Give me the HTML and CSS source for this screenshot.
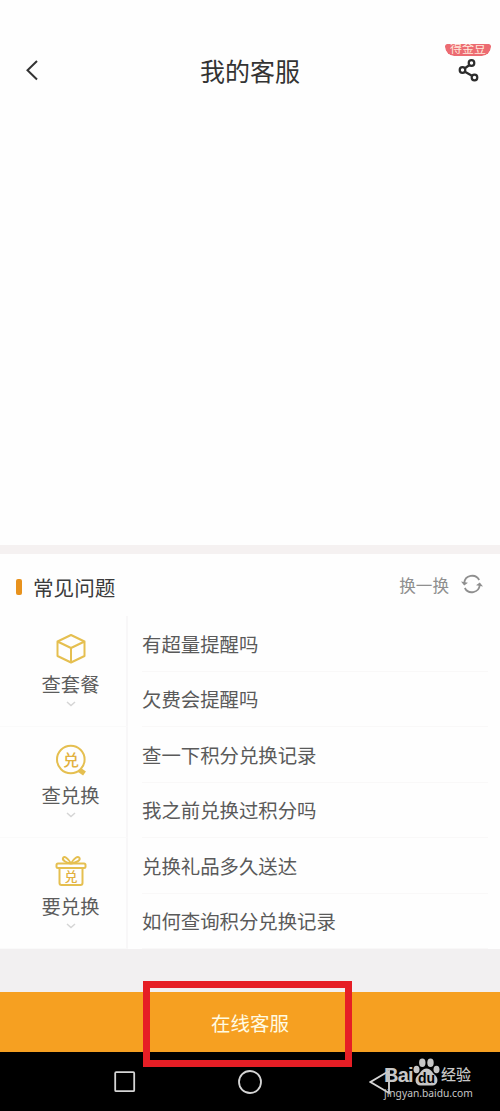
FILE: index.html
```html
<!DOCTYPE html>
<html lang="zh-CN">
<head>
<meta charset="utf-8">
<title>我的客服</title>
<link rel="stylesheet" href="styles.css">
</head>
<body>
<div class="screen">
  <header class="header">
    <svg class="back" width="14" height="24" viewBox="0 0 14 24"><path d="M12 3 2.500 12.200 12 21.500"/></svg>
    <h1 class="title">我的客服</h1>
    <div class="share-wrap">
      <span class="badge">得金豆</span>
      <svg class="share" width="22" height="24" viewBox="0 0 22 24"><path d="M6.500 10.500 11.500 7M6.500 13.500 13.500 17.500"/><circle cx="13.500" cy="5" r="2.800"/><circle cx="4.500" cy="12" r="2.800"/><circle cx="16.500" cy="19.500" r="2.800"/></svg>
    </div>
  </header>
  <main class="chat"></main>
  <section class="faq">
    <div class="faq-head">
      <i class="mark"></i>
      <h2 class="faq-title">常见问题</h2>
      <span class="swap">换一换</span>
      <svg class="refresh" width="22" height="20" viewBox="0 0 22 20"><path d="M3.200 9A8 8 0 0 1 18.200 6M18.800 11A8 8 0 0 1 3.800 14"/><path class="tip" d="M0 7.500 7 8.800 3.200 11.500ZM22 12.500 15 11.200 18.800 8.500Z"/></svg>
    </div>
    <div class="group">
      <div class="cat">
        <svg class="cat-icon" width="32" height="32" viewBox="0 0 32 32"><path d="M16 2 29.500 8.500V23L16 29.500 2.500 23V8.500ZM2.500 8.500 16 15 29.500 8.500M16 15V29.500"/></svg>
        <span>查套餐</span>
        <svg class="down" width="10" height="6" viewBox="0 0 10 6"><path d="M1 1 5 4.500 9 1"/></svg>
      </div>
      <div class="questions"><p class="q">有超量提醒吗</p><p class="q">欠费会提醒吗</p></div>
    </div>
    <div class="group">
      <div class="cat">
        <svg class="cat-icon" width="32" height="32" viewBox="0 0 32 32"><circle cx="15.800" cy="15.500" r="13.800"/><path d="M24.500 26 29.500 29.500" stroke-width="5"/><text x="16" y="21.500" font-size="16">兑</text></svg>
        <span>查兑换</span>
        <svg class="down" width="10" height="6" viewBox="0 0 10 6"><path d="M1 1 5 4.500 9 1"/></svg>
      </div>
      <div class="questions"><p class="q">查一下积分兑换记录</p><p class="q">我之前兑换过积分吗</p></div>
    </div>
    <div class="group">
      <div class="cat">
        <svg class="cat-icon" width="32" height="32" viewBox="0 0 32 32"><rect x="1.500" y="8.500" width="29" height="4.500" rx="1.500"/><path d="M4.500 13V28Q4.500 30 6.500 30H25.500Q27.500 30 27.500 28V13M16 8.500C13 3 9 .5 8 3S12 8 16 8.500C19 3 23 .5 24.500 3S20 8 16 8.500"/><text x="16" y="26" font-size="13">兑</text></svg>
        <span>要兑换</span>
        <svg class="down" width="10" height="6" viewBox="0 0 10 6"><path d="M1 1 5 4.500 9 1"/></svg>
      </div>
      <div class="questions"><p class="q">兑换礼品多久送达</p><p class="q">如何查询积分兑换记录</p></div>
    </div>
  </section>
  <div class="online">在线客服</div>
  <nav class="nav">
    <svg class="nav-square" width="22" height="22" viewBox="0 0 22 22"><rect x="1.200" y="1.200" width="19" height="19" rx="1"/></svg>
    <svg class="nav-circle" width="24" height="24" viewBox="0 0 24 24"><circle cx="12" cy="12" r="11"/></svg>
    <svg class="nav-back" width="22" height="26" viewBox="0 0 22 26"><path d="M20 2V24L1.500 13Z"/></svg>
  </nav>
  <div class="highlight"></div>
  <div class="watermark">
    <div class="wm-brand">
      <span class="wm-bai">Bai</span>
      <svg class="paw" width="27" height="28" viewBox="0 0 27 28"><ellipse cx="3.500" cy="11.500" rx="3" ry="3.800"/><ellipse cx="9.300" cy="4.800" rx="3.200" ry="4.200"/><ellipse cx="17.500" cy="4.800" rx="3.200" ry="4.200"/><ellipse cx="23.500" cy="11.500" rx="3" ry="3.800"/><path d="M13.500 10.500C18 10.500 19 14.500 22 17 26 20.500 25 27.500 19.500 27.500H7.500C2 27.500 1 20.500 5 17 8 14.500 9 10.500 13.500 10.500Z"/><text x="13.500" y="25">du</text></svg>
      <span class="wm-jy">经验</span>
    </div>
    <div class="wm-url">jingyan.baidu.com</div>
  </div>
</div>
</body>
</html>
```
FILE: styles.css
```css
* { box-sizing: border-box; }
body { margin: 0; background: #fff; font-family: "Noto Sans CJK SC", sans-serif; }
h1, h2, p { margin: 0; font-weight: 400; }
svg { display: block; fill: none; flex: none; }
.screen { position: relative; width: 500px; height: 1111px; display: flex; flex-direction: column; overflow: hidden; background: #fefefe; }

.header { height: 100px; padding: 44px 9px 0 25px; display: grid; grid-template-columns: 45px 1fr 61px; align-items: start; }
.back { margin-top: 14px; stroke: #333; stroke-width: 2; }
.title { margin-top: 8px; text-align: center; font-size: 25px; line-height: 36px; color: #333; }
.share-wrap { display: flex; flex-direction: column; align-items: flex-end; }
.badge { width: 46px; height: 12px; border-radius: 2px 2px 9px 9px; background: #ec6b72; color: #ffe9dc; font-size: 12px; line-height: 8px; text-align: center; clip-path: inset(0 round 2px 2px 9px 9px); }
.share { margin: 2px 11px 0 0; stroke: #2c2c2c; stroke-width: 2.200; }

.chat { flex: 1; }

.faq { height: 404px; border-top: 9px solid #f5f1f1; }
.faq-head { height: 62px; padding: 4px 17px 0 16px; display: flex; align-items: center; }
.mark { width: 6px; height: 16px; border-radius: 2px; background: #e8921d; }
.faq-title { margin: 0 auto 0 11px; font-size: 20.600px; color: #3b3b3b; }
.swap { margin: -5px 12px 0 0; font-size: 16.600px; color: #8f8f8f; }
.refresh { margin-top: -6px; stroke: #8f8f8f; stroke-width: 1.800; }
.refresh .tip { fill: #8f8f8f; stroke: none; }

.group { height: 111px; display: grid; grid-template-columns: 128px 1fr; }
.cat { padding: 17px 0 0 15px; display: flex; flex-direction: column; align-items: center; border-right: 2px solid #f8f7f8; border-bottom: 1px solid #fafafa; font-size: 19.300px; line-height: 30px; color: #5c5c5c; }
.cat-icon { stroke: #e5bf50; stroke-width: 2; stroke-linejoin: round; margin-bottom: 4px; }
.cat-icon text { fill: #e2b13f; stroke: none; font-weight: 500; text-anchor: middle; }
.down { margin-top: 2px; stroke: #d5d5d5; stroke-width: 1.500; }
.questions { padding: 0 12px 0 14px; display: grid; grid-template-rows: 1fr 1fr; }
.q { display: flex; align-items: center; border-bottom: 1px solid #f9f8f8; font-size: 19.400px; color: #5a5a5a; }

.online { height: 103px; border-top: 43px solid #f2f0f1; display: flex; align-items: center; justify-content: center; background: #f6a021; color: #fffbe2; font-size: 19.500px; }
.nav { height: 59px; padding-left: 114px; display: flex; align-items: center; background: #000; stroke: #d5d5d5; stroke-width: 1.800; }
.nav-circle { margin-left: 102px; }
.nav-back { margin-left: 107px; }

.highlight { position: absolute; left: 143px; top: 981px; width: 209px; height: 86px; border: 7px solid #e61e25; }
.watermark { position: absolute; left: 384px; top: 1057px; width: 92px; color: #c7c7c7; }
.wm-brand { height: 29px; display: flex; align-items: flex-end; }
.wm-bai { width: 29px; font: 700 20px/22px "Liberation Sans", sans-serif; letter-spacing: -.8px; }
.paw { fill: #c7c7c7; }
.paw text { fill: #000; font: 700 14px "Liberation Sans", sans-serif; text-anchor: middle; }
.wm-jy { font-size: 15px; line-height: 25px; font-weight: 500; white-space: nowrap; margin-left: 1px; }
.wm-url { font: 10.250px/13px "Noto Sans", sans-serif; white-space: nowrap; margin-top: 1px; }
```
